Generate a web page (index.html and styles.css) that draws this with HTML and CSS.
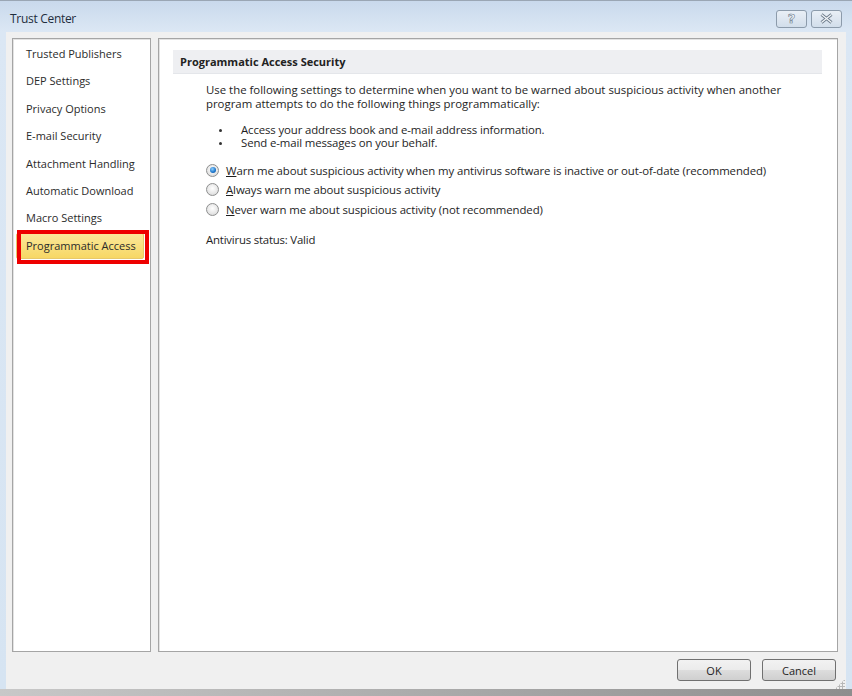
FILE: index.html
```html
<!DOCTYPE html>
<html lang="en">
<head>
  <meta charset="UTF-8">
  <title>Trust Center</title>
  <link rel="stylesheet" href="styles.css">
</head>
<body>
  <div class="window">
    <!-- Title bar -->
    <div class="titlebar">
      <span class="title">Trust Center</span>
      <div class="caption-buttons">
        <button class="cap-btn">?</button>
        <button class="cap-btn">
          <svg width="13" height="11" viewBox="0 0 13 11">
            <path d="M1.5 1.5 L11.5 9.5 M11.5 1.5 L1.5 9.5" stroke="#6d7c8c" stroke-width="3" fill="none"/>
            <path d="M1.5 1.5 L11.5 9.5 M11.5 1.5 L1.5 9.5" stroke="#f4f7fa" stroke-width="1.2" fill="none"/>
          </svg>
        </button>
      </div>
    </div>

    <!-- Client area -->
    <div class="client">
      <div class="panes">
        <ul class="nav">
          <li>Trusted Publishers</li>
          <li>DEP Settings</li>
          <li>Privacy Options</li>
          <li>E-mail Security</li>
          <li>Attachment Handling</li>
          <li>Automatic Download</li>
          <li>Macro Settings</li>
          <li class="selected">Programmatic Access<span class="mark"></span></li>
        </ul>

        <div class="content">
          <div class="section-head">Programmatic Access Security</div>
          <div class="section-body">
            <p class="intro">Use the following settings to determine when you want to be warned about suspicious activity when another program attempts to do the following things programmatically:</p>
            <ul class="bullets">
              <li>Access your address book and e-mail address information.</li>
              <li>Send e-mail messages on your behalf.</li>
            </ul>
            <div class="options">
              <label class="option"><span class="radio checked"></span><span><u>W</u>arn me about suspicious activity when my antivirus software is inactive or out-of-date (recommended)</span></label>
              <label class="option"><span class="radio"></span><span><u>A</u>lways warn me about suspicious activity</span></label>
              <label class="option"><span class="radio"></span><span><u>N</u>ever warn me about suspicious activity (not recommended)</span></label>
            </div>
            <p class="status">Antivirus status: Valid</p>
          </div>
        </div>
      </div>

      <div class="footer">
        <button class="btn">OK</button>
        <button class="btn">Cancel</button>
        <span class="grip"></span>
      </div>
    </div>
  </div>
</body>
</html>
```

FILE: styles.css
```css
/* Base */
body {
  margin: 0;
  padding: 0;
  width: 852px;
  height: 696px;
  overflow: hidden;
  background: linear-gradient(to right, #c8c8c8, #8e8e8e);
  font-family: 'Open Sans', 'Noto Sans', sans-serif;
  font-size: 11.4px;
  color: #1e1e1e;
}

/* Window frame */
.window {
  height: 689px;
  border-top: 1px solid #9aa6b4;
  background: linear-gradient(to bottom, #c9d9ec 0, #dbe7f4 30px, #d6e4f2 100%);
  display: flex;
  flex-direction: column;
  padding: 0 6px 0 6px;
  box-sizing: border-box;
}

.titlebar {
  height: 31px;
  display: flex;
  align-items: center;
  justify-content: space-between;
}

.title {
  font-size: 12px;
  color: #1f2d3d;
  padding-left: 4px;
  letter-spacing: -0.3px;
  margin-top: 4px;
}

.caption-buttons {
  display: flex;
  gap: 4px;
  margin-right: 4px;
  margin-top: 4px;
}

.cap-btn {
  width: 31px;
  height: 18px;
  border: 1px solid #8c9bab;
  border-radius: 3px;
  background: linear-gradient(to bottom, #e9eff6, #d2deeb);
  padding: 0;
  display: flex;
  align-items: center;
  justify-content: center;
  font-family: 'DejaVu Sans', sans-serif;
  font-size: 13px;
  font-weight: bold;
  color: #f4f7fa;
  -webkit-text-stroke: 0.6px #6d7c8c;
}

/* Client */
.client {
  flex: 1;
  background: #f0f0f0;
  display: flex;
  flex-direction: column;
  padding: 6px 8px 0 6px;
}

.panes {
  flex: 1;
  display: flex;
  gap: 7px;
}

/* Left navigation */
.nav {
  list-style: none;
  margin: 0;
  padding: 1px 0 0 0;
  width: 137px;
  background: #fff;
  border: 1px solid #a5a5a5;
  box-shadow: inset 1px 1px 0 #e3e3e3;
  font-size: 11px;
}

.nav li {
  height: 27.4px;
  line-height: 27.4px;
  padding-left: 13px;
  color: #2b2b2b;
  white-space: nowrap;
  position: relative;
}

.nav li.selected {
  margin: 0 6px 0 3px;
  padding-left: 9px;
  height: 24px;
  line-height: 24px;
  margin-top: 1px;
  border: 1px solid #e8c96a;
  border-radius: 2px;
  background: linear-gradient(to bottom, #fbe89a, #f7d764);
}

/* Red highlight mark drawn over the selected item */
.mark {
  position: absolute;
  left: 0;
  top: -4px;
  width: 124px;
  height: 26px;
  border: 4px solid #ee0000;
}

/* Right content */
.content {
  flex: 1;
  background: #fff;
  border: 1px solid #a5a5a5;
  box-shadow: inset 1px 1px 0 #e3e3e3;
  padding: 11px 15px 0 14px;
}

.section-head {
  height: 23px;
  line-height: 23px;
  background: #eeeff2;
  border-bottom: 1px solid #e4e6ea;
  font-weight: bold;
  font-size: 11px;
  padding-left: 7px;
  color: #222;
}

.section-body {
  padding-left: 33px;
  padding-top: 9px;
}

.intro {
  margin: 0;
  line-height: 14px;
  width: 600px;
}

.bullets {
  margin: 12px 0 0 0;
  padding-left: 35px;
  line-height: 13.4px;
  letter-spacing: -0.12px;
}

.bullets li {
  list-style: none;
  position: relative;
}

.bullets li::before {
  content: '';
  position: absolute;
  left: -22px;
  top: 6px;
  width: 3px;
  height: 3px;
  border-radius: 50%;
  background: #333;
}

.options {
  margin-top: 13px;
  display: flex;
  flex-direction: column;
  gap: 5px;
}

.option {
  display: flex;
  align-items: center;
  gap: 7px;
  height: 14.5px;
  letter-spacing: -0.1px;
}

.radio {
  width: 11px;
  height: 11px;
  border-radius: 50%;
  border: 1px solid #8e8f8f;
  background: radial-gradient(circle at 50% 40%, #fff 0, #e6e6e6 60%, #cfcfcf 100%);
  position: relative;
  flex: none;
}

.radio.checked::after {
  content: '';
  position: absolute;
  left: 2.5px;
  top: 2.5px;
  width: 6px;
  height: 6px;
  border-radius: 50%;
  background: radial-gradient(circle at 40% 35%, #8fd0ff 0, #1a73c9 60%, #0b4f98 100%);
}

.status {
  margin: 16px 0 0 0;
  letter-spacing: -0.2px;
}

/* Footer buttons */
.footer {
  height: 37px;
  display: flex;
  justify-content: flex-end;
  align-items: flex-start;
  gap: 11px;
  position: relative;
  padding-top: 7px;
  box-sizing: border-box;
}

.btn {
  width: 74px;
  height: 22px;
  border: 1px solid #707070;
  border-radius: 3px;
  background: linear-gradient(to bottom, #f2f2f2 0, #ebebeb 50%, #dddddd 51%, #cfcfcf 100%);
  font-family: 'Open Sans', 'Noto Sans', sans-serif;
  font-size: 11px;
  color: #1e1e1e;
}

.btn:last-of-type {
  margin-right: 2px;
}

.grip {
  position: absolute;
  right: -7px;
  bottom: 0;
  width: 10px;
  height: 10px;
  background: radial-gradient(circle, #b8b8b8 1px, transparent 1.2px) 0 0 / 3px 3px;
  clip-path: polygon(100% 0, 100% 100%, 0 100%);
}
```
